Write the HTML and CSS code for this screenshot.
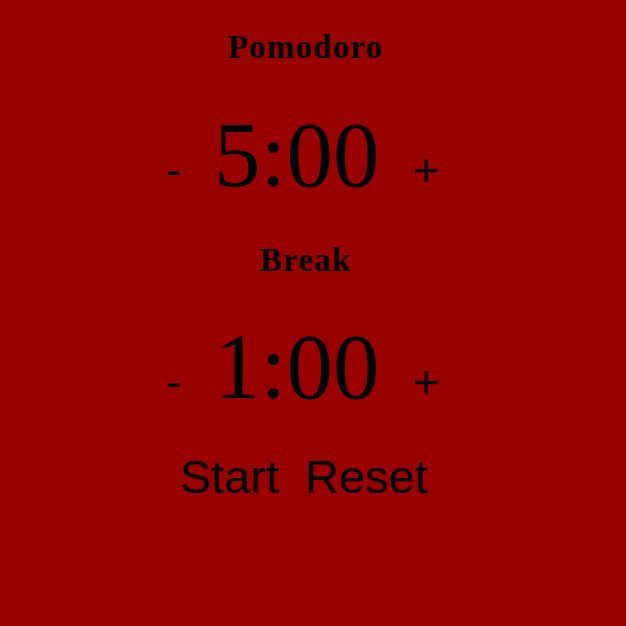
FILE: index.html
```html
<!DOCTYPE html>
<html lang="en">
<head>
<meta charset="utf-8">
<title>Pomodoro</title>
<link rel="stylesheet" href="styles.css">
</head>
<body>
<main class="app">
  <h1 class="label label-session">Pomodoro</h1>
  <div class="timer-row timer-session">
    <button class="adjust" type="button">-</button>
    <span class="time">5:00</span>
    <button class="adjust" type="button">+</button>
  </div>
  <h1 class="label label-break">Break</h1>
  <div class="timer-row timer-break">
    <button class="adjust" type="button">-</button>
    <span class="time">1:00</span>
    <button class="adjust" type="button">+</button>
  </div>
  <div class="controls">
    <button class="control" type="button">Start</button>
    <button class="control" type="button">Reset</button>
  </div>
</main>
</body>
</html>
```
FILE: styles.css
```css
html, body {
  margin: 0;
  padding: 0;
  background: #990000;
  color: #000;
}

body {
  height: 626px;
  overflow: hidden;
}

.app {
  display: flex;
  flex-direction: column;
  align-items: center;
  margin: 0 23px 0 8px;
  padding-top: 27px;
}

.label {
  margin: 0;
  font-family: "Liberation Serif", "Times New Roman", serif;
  font-weight: bold;
  font-size: 33px;
  line-height: 40px;
  letter-spacing: 1.2px;
}

.timer-row {
  display: flex;
  align-items: baseline;
  height: 100px;
  padding-right: 6px;
}

.timer-row .time {
  margin: 0 33px 0 33px;
}

.timer-session {
  margin: 38px 0 35px;
}

.timer-break {
  margin: 37px 0 34px;
}

.time {
  font-family: "Liberation Serif", "Times New Roman", serif;
  font-size: 93px;
  line-height: 100px;
}

.adjust,
.control {
  background: none;
  border: none;
  padding: 0;
  margin: 0;
  color: #000;
  font-family: "Liberation Sans", Arial, sans-serif;
  font-size: 46px;
  line-height: 56px;
  cursor: pointer;
}

.control {
  font-size: 47px;
}

.controls {
  display: flex;
  gap: 26px;
  margin-left: -4px;
  margin-top: -2px;
}
```
